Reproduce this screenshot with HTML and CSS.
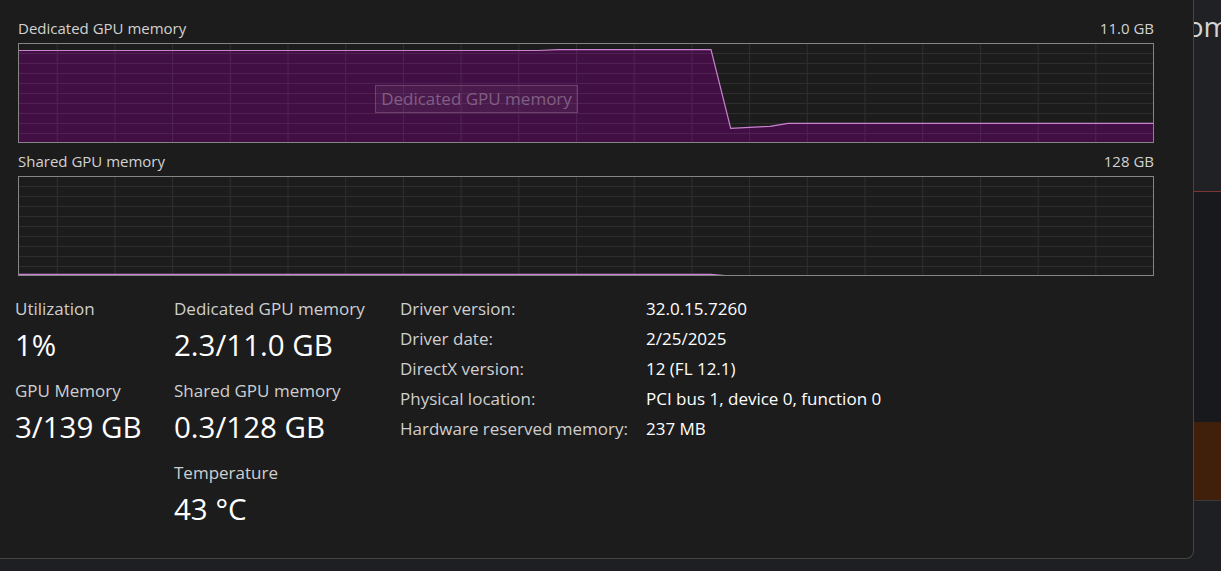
FILE: index.html
```html
<!DOCTYPE html>
<html>
<head>
<meta charset="utf-8">
<link rel="stylesheet" href="styles.css">
</head>
<body>
<div class="stage">
  <div class="panel">
    <div class="chart-head"><span>Dedicated GPU memory</span><span>11.0 GB</span></div>
    <div class="chart">
      <svg width="1136" height="100" viewBox="0 0 1136 100">
        <defs>
          <pattern id="grid" x="38.7" y="0" width="57.7" height="10" patternUnits="userSpaceOnUse">
            <path d="M0.5 0 V10 M0 0.5 H57.7" stroke="rgba(255,255,255,0.08)" stroke-width="1" fill="none"/>
          </pattern>
        </defs>
        <path d="M0 7.5 L520 7.5 L540 6.7 L693 6.7 L712.7 85.3 L752 83.3 L770 80.3 L1136 80.3 L1136 100 L0 100 Z" fill="#410f43"/>
        <rect x="0" y="0" width="1136" height="100" fill="url(#grid)"/>
        <path d="M0 7.5 L520 7.5 L540 6.7 L693 6.7 L712.7 85.3 L752 83.3 L770 80.3 L1136 80.3" fill="none" stroke="#c983d0" stroke-width="1.2"/>
        <rect x="0.5" y="0.5" width="1135" height="99" fill="none" stroke="#858585" stroke-width="1"/>
      </svg>
      <div class="ghost">Dedicated GPU memory</div>
    </div>
    <div class="chart-head second"><span>Shared GPU memory</span><span>128 GB</span></div>
    <div class="chart">
      <svg width="1136" height="100" viewBox="0 0 1136 100">
        <rect x="0" y="0" width="1136" height="100" fill="url(#grid)"/>
        <path d="M0 98.3 L693 98.3 L707 100 L0 100 Z" fill="#410f43"/>
        <path d="M0 98.3 L693 98.3 L707 99.6" fill="none" stroke="#c983d0" stroke-width="1.3"/>
        <rect x="0.5" y="0.5" width="1135" height="99" fill="none" stroke="#858585" stroke-width="1"/>
      </svg>
    </div>
    <div class="stats">
      <div class="col col-a">
        <div class="stat"><div class="label">Utilization</div><div class="value">1%</div></div>
        <div class="stat"><div class="label">GPU Memory</div><div class="value">3/139 GB</div></div>
      </div>
      <div class="col col-b">
        <div class="stat"><div class="label">Dedicated GPU memory</div><div class="value">2.3/11.0 GB</div></div>
        <div class="stat"><div class="label">Shared GPU memory</div><div class="value">0.3/128 GB</div></div>
        <div class="stat"><div class="label">Temperature</div><div class="value">43 °C</div></div>
      </div>
      <div class="info">
        <div class="k">Driver version:</div><div class="v">32.0.15.7260</div>
        <div class="k">Driver date:</div><div class="v">2/25/2025</div>
        <div class="k">DirectX version:</div><div class="v">12 (FL 12.1)</div>
        <div class="k">Physical location:</div><div class="v">PCI bus 1, device 0, function 0</div>
        <div class="k">Hardware reserved memory:</div><div class="v">237 MB</div>
      </div>
    </div>
  </div>
  <div class="side">
    <div class="side-top"><span class="side-title">Com</span></div>
    <div class="side-mid"></div>
    <div class="side-block"></div>
    <div class="side-bottom"></div>
  </div>
</div>
</body>
</html>
```
FILE: styles.css
```css
html, body {
  margin: 0;
  padding: 0;
  background: #1d1f23;
  overflow: hidden;
}
body {
  font-family: "Open Sans", "Noto Sans", sans-serif;
}
.stage {
  display: flex;
  width: 1221px;
  height: 571px;
}
.panel {
  flex: none;
  width: 1175px;
  height: 558px;
  padding-left: 18px;
  background: #1c1c1c;
  border-right: 1px solid #454545;
  border-bottom: 1px solid #454545;
  border-bottom-right-radius: 8px;
}
.chart-head {
  width: 1136px;
  display: flex;
  justify-content: space-between;
  color: #d2d2d2;
  font-size: 15px;
  height: 20px;
  line-height: 20px;
  margin-top: 18px;
}
.chart-head.second {
  margin-top: 8px;
}
.chart {
  position: relative;
  width: 1136px;
  height: 100px;
  margin-top: 5px;
}
.chart svg {
  display: block;
}
.ghost {
  position: absolute;
  left: 357px;
  top: 42px;
  width: 203px;
  height: 28px;
  box-sizing: border-box;
  border: 1px solid rgba(150, 110, 150, 0.45);
  background: rgba(120, 80, 120, 0.18);
  color: #7f5f83;
  font-size: 17px;
  line-height: 26px;
  text-align: center;
  white-space: nowrap;
}
.stats {
  display: flex;
  align-items: flex-start;
  margin-top: 22px;
}
.col-a {
  margin-left: -3px;
  width: 159px;
}
.col-b {
  width: 226px;
}
.stat {
  height: 82px;
}
.label {
  color: #cfcfcf;
  font-size: 17px;
  line-height: 22px;
  height: 22px;
  white-space: nowrap;
}
.value {
  color: #ffffff;
  font-size: 29.5px;
  line-height: 36px;
  margin-top: 7px;
  white-space: nowrap;
}
.info {
  display: grid;
  grid-template-columns: 246px auto;
  align-content: start;
  margin-top: -4px;
  font-size: 17px;
  line-height: 30px;
}
.info .k {
  color: #cfcfcf;
  white-space: nowrap;
}
.info .v {
  color: #ffffff;
  white-space: nowrap;
}
.side {
  flex: none;
  width: 27px;
  height: 571px;
  display: flex;
  flex-direction: column;
  overflow: hidden;
}
.side-top {
  height: 191px;
  background: #1f2125;
  border-bottom: 1px solid #7c3434;
}
.side-title {
  display: block;
  margin-left: -25px;
  margin-top: 8px;
  color: #d4d4d4;
  font-size: 28px;
  line-height: 36px;
  white-space: nowrap;
}
.side-mid {
  height: 230px;
  background: #17191d;
}
.side-block {
  height: 78px;
  background: #41200b;
  border-bottom: 1px solid #3a3a3a;
}
.side-bottom {
  flex: 1;
  background: #1d1f23;
}
```
